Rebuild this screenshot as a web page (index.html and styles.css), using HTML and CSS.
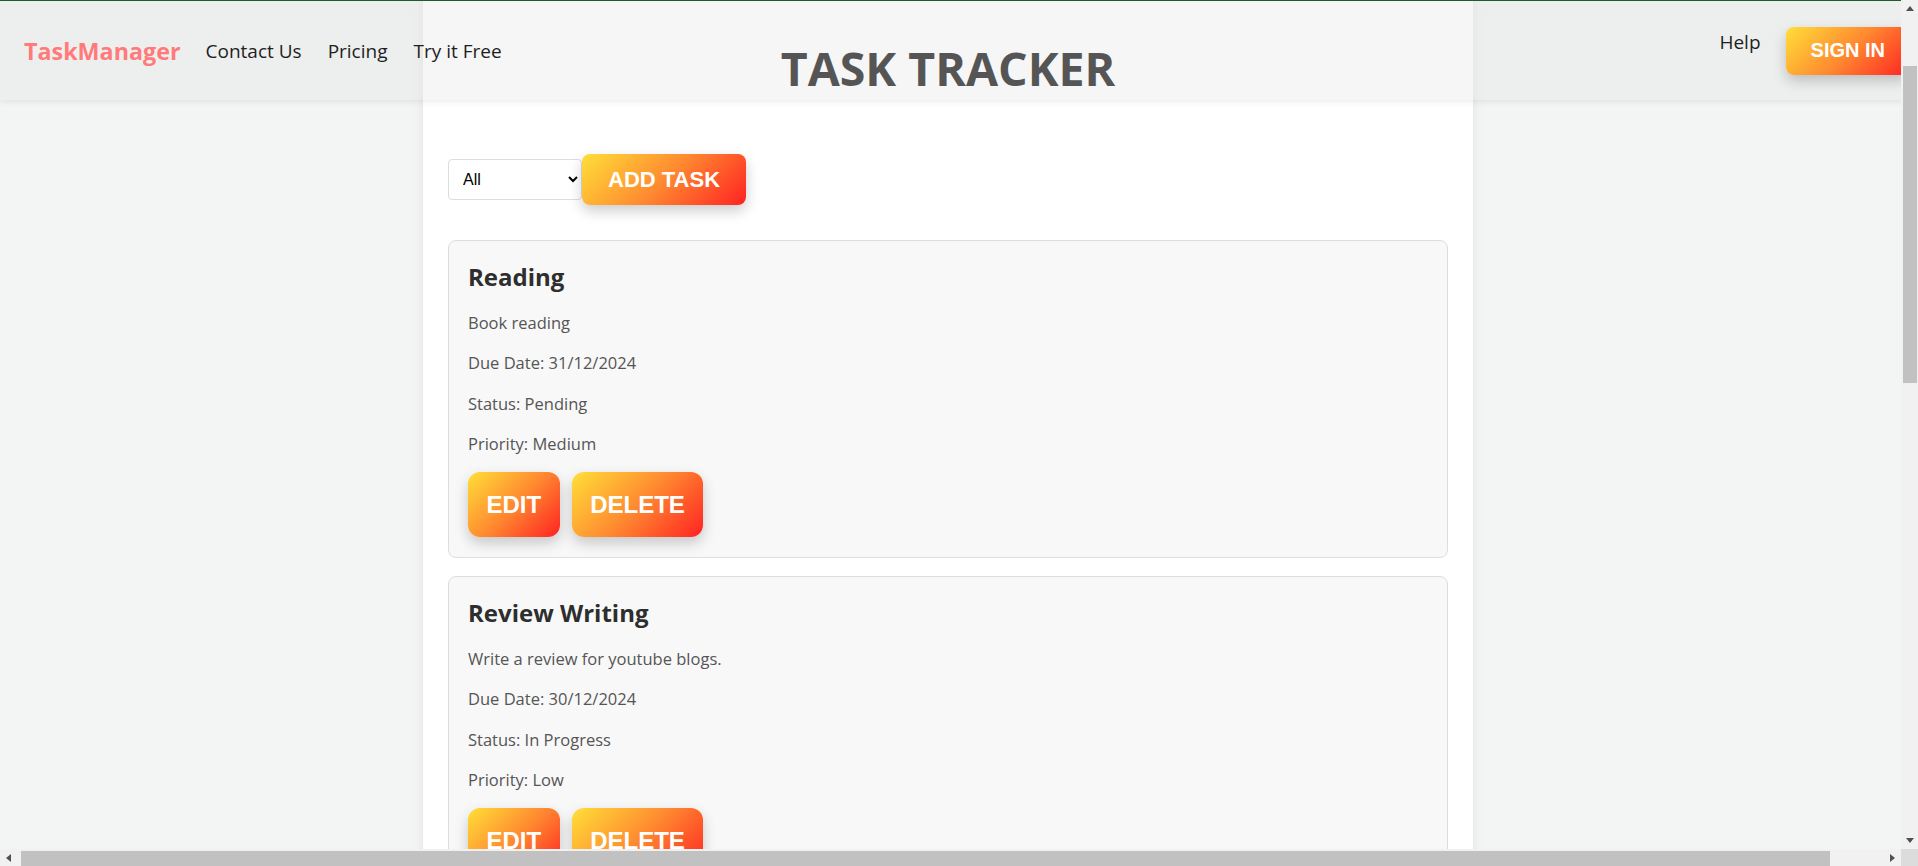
FILE: index.html
```html
<!DOCTYPE html>
<html lang="en">
<head>
<meta charset="utf-8">
<title>Task Tracker</title>
<link rel="stylesheet" href="styles.css">
</head>
<body>
<header class="topbar">
  <div class="brand-nav">
    <a class="logo" href="#">TaskManager</a>
    <nav class="nav">
      <a href="#">Contact Us</a>
      <a href="#">Pricing</a>
      <a href="#">Try it Free</a>
    </nav>
  </div>
  <div class="right">
    <a class="help" href="#">Help</a>
    <button class="btn btn-signin">SIGN IN</button>
  </div>
</header>
<main class="container">
  <h1 class="title">TASK TRACKER</h1>
  <div class="controls">
    <select class="filter">
      <option>All</option>
      <option>Pending</option>
      <option>In Progress</option>
      <option>Completed</option>
    </select>
    <button class="btn btn-add">ADD TASK</button>
  </div>
  <div class="task-list">
    <div class="card">
      <h2 class="card-title">Reading</h2>
      <p>Book reading</p>
      <p>Due Date: 31/12/2024</p>
      <p>Status: Pending</p>
      <p>Priority: Medium</p>
      <div class="actions">
        <button class="btn btn-card">EDIT</button>
        <button class="btn btn-card">DELETE</button>
      </div>
    </div>
    <div class="card">
      <h2 class="card-title">Review Writing</h2>
      <p>Write a review for youtube blogs.</p>
      <p>Due Date: 30/12/2024</p>
      <p>Status: In Progress</p>
      <p>Priority: Low</p>
      <div class="actions">
        <button class="btn btn-card">EDIT</button>
        <button class="btn btn-card">DELETE</button>
      </div>
    </div>
  </div>
</main>

<div class="vscroll" aria-hidden="true">
  <div class="sb-arrow">
    <svg width="8" height="5" viewBox="0 0 8 5"><path d="M0 5 L4 0 L8 5 Z" fill="#505050"/></svg>
  </div>
  <div class="vtrack"><div class="vthumb"></div></div>
  <div class="sb-arrow">
    <svg width="8" height="5" viewBox="0 0 8 5"><path d="M0 0 L8 0 L4 5 Z" fill="#505050"/></svg>
  </div>
</div>
<div class="hscroll" aria-hidden="true">
  <div class="sb-arrow">
    <svg width="5" height="8" viewBox="0 0 5 8"><path d="M5 0 L5 8 L0 4 Z" fill="#505050"/></svg>
  </div>
  <div class="htrack"><div class="hthumb"></div></div>
  <div class="sb-arrow">
    <svg width="5" height="8" viewBox="0 0 5 8"><path d="M0 0 L5 4 L0 8 Z" fill="#505050"/></svg>
  </div>
</div>
<div class="sb-corner" aria-hidden="true"></div>
</body>
</html>
```
FILE: styles.css
```css
html, body {
  margin: 0;
}
body {
  padding-right: 22px;
  background: #f3f4f4;
  font-family: "Open Sans", "Noto Sans", sans-serif;
  color: #222;
}

/* ---------- top bar (overlays the page) ---------- */
.topbar {
  position: absolute;
  top: 0;
  left: 0;
  z-index: 10;
  width: 100%;
  height: 100px;
  box-sizing: border-box;
  border-top: 1px solid #1e5b28;
  padding: 0 8px 0 24px;
  display: flex;
  justify-content: space-between;
  align-items: center;
  background: rgba(225, 228, 226, 0.35);
  box-shadow: 0 2px 6px rgba(0, 0, 0, 0.08);
}
.brand-nav {
  display: flex;
  align-items: center;
  gap: 25px;
}
.logo {
  font-size: 23.3px;
  font-weight: 700;
  color: #ff7b7b;
  text-decoration: none;
}
.nav {
  display: flex;
  gap: 26px;
}
.nav a,
.help {
  font-size: 19px;
  color: #1e1e1e;
  text-decoration: none;
}
.right {
  display: flex;
  align-items: flex-start;
  gap: 25px;
}
.help {
  margin-top: 3px;
  line-height: 25px;
}

/* ---------- buttons ---------- */
.btn {
  font-family: "Liberation Sans", Arial, sans-serif;
  font-weight: 700;
  color: #fff;
  border: none;
  background: linear-gradient(135deg, #ffdf38 0%, #ff8a30 50%, #ff2222 100%);
  box-shadow: 0 6px 14px rgba(0, 0, 0, 0.2);
  cursor: pointer;
}
.btn-signin {
  font-size: 20px;
  line-height: 23px;
  padding: 12.5px 25px;
  border-radius: 8px;
}

/* ---------- main column ---------- */
.container {
  box-sizing: border-box;
  width: 1050px;
  min-height: 100vh;
  margin: 0 auto;
  padding: 36px 25px 40px;
  background: #fff;
  box-shadow: 0 0 10px rgba(0, 0, 0, 0.08);
}
.title {
  position: relative;
  z-index: 11;
  margin: 0 0 53px;
  font-size: 46.5px;
  line-height: 65px;
  font-weight: 700;
  text-align: center;
  color: #555;
}

.controls {
  display: flex;
  align-items: center;
}
.filter {
  box-sizing: border-box;
  width: 134px;
  height: 41px;
  padding: 0 10px;
  font-family: "Liberation Sans", Arial, sans-serif;
  font-size: 16px;
  color: #000;
  background: #fff;
  border: 1px solid #ddd;
  border-radius: 4px;
}
.btn-add {
  font-size: 22px;
  line-height: 25px;
  padding: 13px 26px;
  border-radius: 8px;
}

.task-list {
  margin-top: 35px;
  display: flex;
  flex-direction: column;
  gap: 18px;
}
.card {
  background: #f8f8f8;
  border: 1px solid #ddd;
  border-radius: 8px;
  padding: 20px 20px 20px 19px;
}
.card-title {
  margin: 1px 0 19px;
  font-size: 24px;
  line-height: 30px;
  font-weight: 700;
  color: #2e2e2e;
}
.card p {
  margin: 0 0 16px;
  font-size: 16.5px;
  line-height: 24.25px;
  color: #555;
}
.actions {
  display: flex;
  gap: 12px;
}
.btn-card {
  font-size: 24px;
  line-height: 28px;
  padding: 18.5px 18.5px;
  border-radius: 12px;
}

/* ---------- window scrollbars (drawn over the page) ---------- */
.vscroll {
  position: fixed;
  top: 0;
  right: 0;
  z-index: 20;
  width: 17px;
  height: calc(100% - 17px);
  display: flex;
  flex-direction: column;
  background: #f1f1f1;
}
.hscroll {
  position: fixed;
  left: 0;
  bottom: 0;
  z-index: 20;
  width: calc(100% - 17px);
  height: 17px;
  display: flex;
  background: #f1f1f1;
}
.sb-arrow {
  flex: 0 0 17px;
  height: 17px;
  display: flex;
  align-items: center;
  justify-content: center;
}
.vtrack {
  flex: 1;
  display: flex;
  flex-direction: column;
}
.vthumb {
  margin: 49px 1px 0 2px;
  height: 317px;
  background: #c1c1c1;
}
.htrack {
  flex: 1;
  display: flex;
}
.hthumb {
  margin: 2px 0 0 4px;
  width: 1809px;
  background: #c1c1c1;
}
.sb-corner {
  position: fixed;
  right: 0;
  bottom: 0;
  z-index: 20;
  width: 17px;
  height: 17px;
  background: #dcdcdc;
}
```
